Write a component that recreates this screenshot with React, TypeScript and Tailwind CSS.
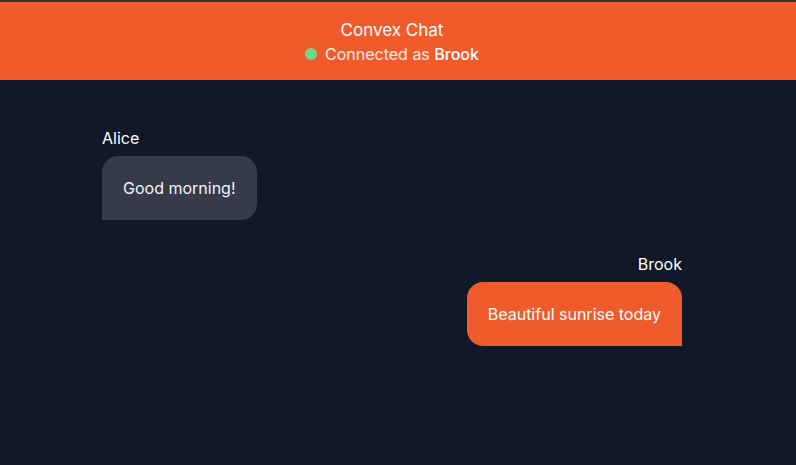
const messages = [
  { id: 1, author: "Alice", body: "Good morning!" },
  { id: 2, author: "Brook", body: "Beautiful sunrise today" },
];

const me = "Brook";

export default function App() {
  return (
    <div className="min-h-[465px] bg-[#111827] font-['Inter',sans-serif] text-white">
      <header className="border-t-2 border-[#333333] bg-[#ef5b2b] pt-4 pr-3 pb-[14px] text-center">
        <h1 className="text-[17px] leading-6 font-normal">Convex Chat</h1>
        <p className="flex items-center justify-center gap-2 text-base leading-6 text-white/90">
          <span className="size-3 rounded-full bg-[#6fd88a]" />
          <span>
            Connected as <strong className="font-medium text-white">{me}</strong>
          </span>
        </p>
      </header>

      <main className="flex flex-col gap-[32px] pt-[46px] pl-[102px] pr-[114px]">
        {messages.map((m) => {
          const mine = m.author === me;
          return (
            <article key={m.id} className={mine ? "flex flex-col items-end" : "flex flex-col items-start"}>
              <div className="mb-1.5 text-base leading-6">{m.author}</div>
              <p
                className={
                  mine
                    ? "rounded-2xl rounded-br-none bg-[#ef5b2b] px-[21px] py-5 text-base leading-6 text-white"
                    : "rounded-2xl rounded-bl-none bg-[#353b48] px-[21px] py-5 text-base leading-6 text-gray-100"
                }
              >
                {m.body}
              </p>
            </article>
          );
        })}
      </main>
    </div>
  );
}
